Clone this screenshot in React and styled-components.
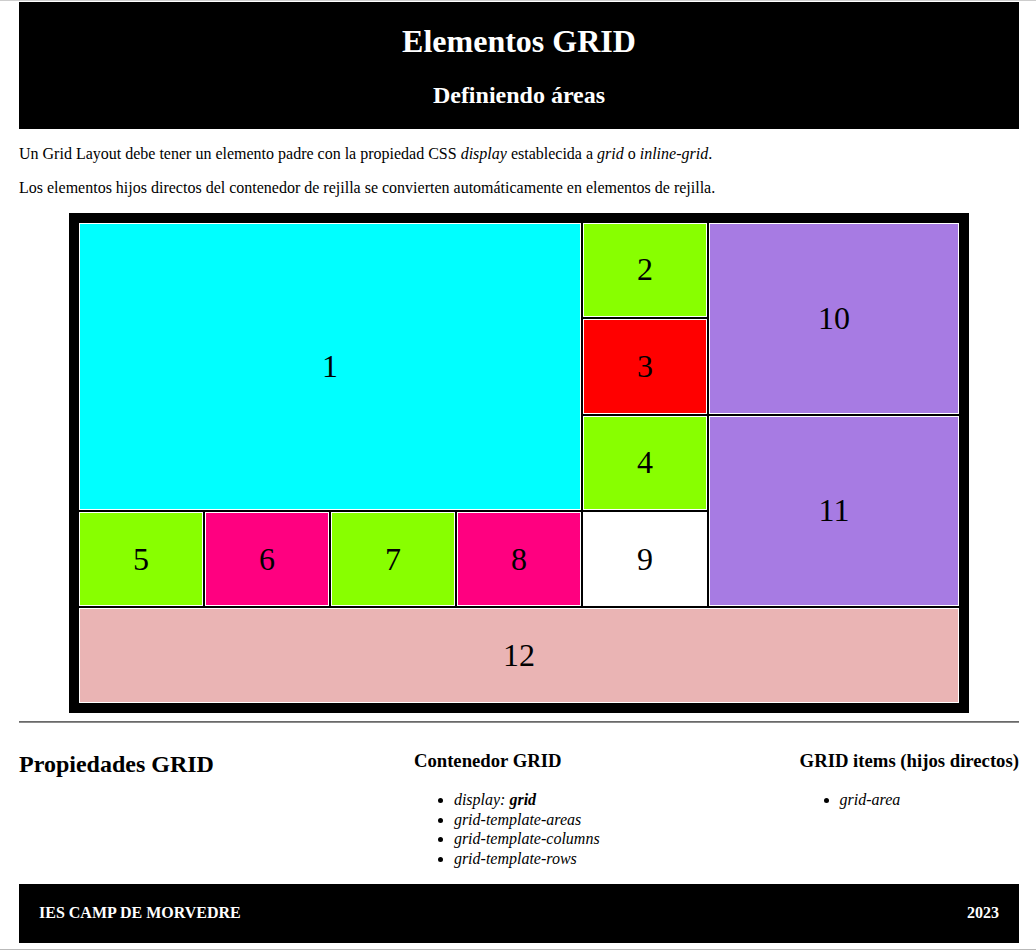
import React from 'react'
import styled, { createGlobalStyle } from 'styled-components'

const GlobalStyle = createGlobalStyle`
    html, body {
        margin: 0;
        padding: 0;
        background: #fff;
    }
    body {
        font-family: "Liberation Serif", "Times New Roman", serif;
        font-size: 16px;
        color: #000;
    }
`

const Page = styled.div`
    height: 950px;
    box-sizing: border-box;
    overflow: hidden;
    border-top: 1px solid #cdcdcd;
    border-bottom: 1px solid #b9b9b9;
    padding-top: 1px;
`

const Container = styled.div`
    width: 1000px;
    margin-left: 19px;
`

const Header = styled.header`
    display: flow-root;
    background-color: #000;
    color: #fff;
    text-align: center;
`

const Title = styled.h1`
    font-size: 32px;
    margin: 21.44px 0;
`

const Subtitle = styled.h2`
    font-size: 24px;
    margin: 19.92px 0;
`

const Text = styled.p`
    margin: 16px 0;
`

const Grid = styled.div`
    width: 900px;
    height: 500px;
    box-sizing: border-box;
    margin: 0 auto;
    padding: 10px;
    background-color: #000;
    display: grid;
    gap: 2px;
    grid-template-columns: repeat(7, 1fr);
    grid-template-rows: repeat(5, 1fr);
    grid-template-areas:
        "a a a a b j j"
        "a a a a c j j"
        "a a a a d k k"
        "e f g h i k k"
        "l l l l l l l";
`

const Item = styled.div`
    grid-area: ${({area}) => area};
    background-color: ${({bg}) => bg};
    border: 1px solid #fff;
    box-sizing: border-box;
    display: flex;
    align-items: center;
    justify-content: center;
    font-size: 32px;
`

const Rule = styled.hr`
    margin: 8px 0;
    border: none;
    border-top: 1px solid #696969;
    border-bottom: 1px solid #8c8c8c;
`

const Props = styled.section`
    display: flex;
    justify-content: space-between;
    align-items: flex-start;
`

const PropsTitle = styled.h2`
    font-size: 24px;
    margin: 19.92px 0;
`

const Column = styled.div`
    display: flow-root;
`

const ColumnTitle = styled.h3`
    font-size: 18.72px;
    margin: 18.72px 0;
`

const List = styled.ul`
    margin: 16px 0;
    padding-left: 40px;
    li {
        font-style: italic;
        line-height: 19.5px;
    }
`

const Footer = styled.footer`
    background-color: #000;
    color: #fff;
    display: flex;
    justify-content: space-between;
    align-items: center;
    padding: 20px;
    font-weight: bold;
    line-height: 18.5px;
`

const items = [
    {n: 1, area: 'a', bg: '#00ffff'},
    {n: 2, area: 'b', bg: '#88ff00'},
    {n: 3, area: 'c', bg: '#ff0000'},
    {n: 4, area: 'd', bg: '#88ff00'},
    {n: 5, area: 'e', bg: '#88ff00'},
    {n: 6, area: 'f', bg: '#ff0080'},
    {n: 7, area: 'g', bg: '#88ff00'},
    {n: 8, area: 'h', bg: '#ff0080'},
    {n: 9, area: 'i', bg: '#ffffff'},
    {n: 10, area: 'j', bg: '#a77be3'},
    {n: 11, area: 'k', bg: '#a77be3'},
    {n: 12, area: 'l', bg: '#eab4b4'},
]

const App = () => {
    return (
        <>
            <GlobalStyle />
            <Page>
                <Container>
                    <Header>
                        <Title>Elementos GRID</Title>
                        <Subtitle>Definiendo áreas</Subtitle>
                    </Header>
                    <Text>
                        Un Grid Layout debe tener un elemento padre con la propiedad CSS <em>display</em> establecida a <em>grid</em> o <em>inline-grid</em>.
                    </Text>
                    <Text>
                        Los elementos hijos directos del contenedor de rejilla se convierten automáticamente en elementos de rejilla.
                    </Text>
                    <Grid>
                        {items.map(it => (
                            <Item key={it.n} area={it.area} bg={it.bg}>{it.n}</Item>
                        ))}
                    </Grid>
                    <Rule />
                    <Props>
                        <PropsTitle>Propiedades GRID</PropsTitle>
                        <Column>
                            <ColumnTitle>Contenedor GRID</ColumnTitle>
                            <List>
                                <li>display: <b>grid</b></li>
                                <li>grid-template-areas</li>
                                <li>grid-template-columns</li>
                                <li>grid-template-rows</li>
                            </List>
                        </Column>
                        <Column>
                            <ColumnTitle>GRID items (hijos directos)</ColumnTitle>
                            <List>
                                <li>grid-area</li>
                            </List>
                        </Column>
                    </Props>
                    <Footer>
                        <span>IES CAMP DE MORVEDRE</span>
                        <span>2023</span>
                    </Footer>
                </Container>
            </Page>
        </>
    )
}

export default App
